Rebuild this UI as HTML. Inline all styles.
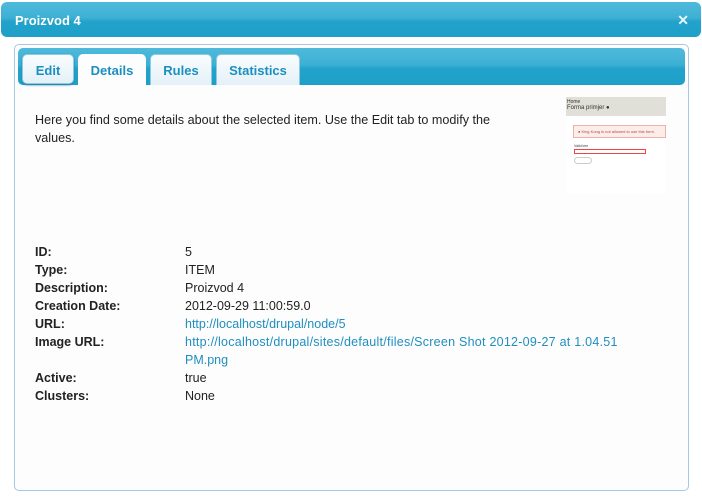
<!DOCTYPE html>
<html><head><style>
*{margin:0;padding:0;box-sizing:border-box}
body{width:702px;height:504px;background:#fff;font-family:"Liberation Sans",sans-serif;font-size:12px;color:#222;position:relative;overflow:hidden}
.title{position:absolute;left:1px;top:2px;width:700px;height:35px;border-radius:6px;background:linear-gradient(#4fbadb,#3db0d4 45%,#22a3cb 55%,#1e9fc8);}
.title span{position:absolute;left:14px;top:11px;color:#fff;font-weight:bold;font-size:13px}
.title b{position:absolute;right:12px;top:10px;color:#e8f6fb;font-size:14px;font-weight:bold}
.panel{position:absolute;left:14px;top:44px;width:675px;height:447px;border:1px solid #a6c8e0;border-radius:5px;background:#fdfdfd}
.bar{position:absolute;left:3px;top:3px;width:667px;height:37px;border-radius:5px;background:linear-gradient(#4fbadb,#3db0d4 45%,#22a3cb 55%,#1e9fc8)}
.tab{position:absolute;top:9px;height:31px;border-radius:5px 5px 0 0;background:linear-gradient(#fafcfd,#e3f1f8);color:#1a8fc0;font-weight:bold;font-size:13px;text-align:center;line-height:31px;border:1px solid #8fc9e2;border-bottom:none}
.tab.act{background:#fdfdfd;border-color:#fdfdfd;height:32px}
.tab.edit{height:30px;box-shadow:0 1px 2px #2c7fa8;border-bottom:1px solid #8fc9e2;border-radius:5px}
.intro{position:absolute;left:35px;top:111px;width:560px;font-size:12.6px;line-height:18px;color:#222;white-space:nowrap}
.shot{position:absolute;left:566px;top:97px;width:100px;height:97px;background:#fff}
table{position:absolute;left:35px;top:243px;border-collapse:collapse}
td{height:18px;font-size:12.5px;vertical-align:top;line-height:18px;white-space:nowrap}
td.l{width:150px;font-weight:bold}
a{color:#1f8fbf;text-decoration:none}
</style></head><body>
<div class="title"><span>Proizvod 4</span><b>✕</b></div>
<div class="panel">
<div class="bar"></div>
<div class="tab edit" style="left:7px;width:52px">Edit</div>
<div class="tab act" style="left:63px;width:68px">Details</div>
<div class="tab" style="left:135px;width:62px">Rules</div>
<div class="tab" style="left:201px;width:84px">Statistics</div>
</div>
<div class="intro">Here you find some details about the selected item. Use the Edit tab to modify the<br>values.</div>
<div class="shot">
<div style="height:19px;background:#e0dfd8;font-size:5px;padding:2px 1px;color:#333">Home<br><span style="font-size:6px">Forma primjer ●</span></div>
<div style="margin:9px 0 0 7px;height:13px;background:#fbeeea;border:1px solid #f0b0a8;font-size:4px;color:#b44;line-height:11px;padding-left:4px">● King Kong is not allowed to use this form.</div>
<div style="margin:6px 0 0 8px;font-size:3.5px;color:#333">Valid ime</div>
<div style="margin:1px 0 0 8px;width:72px;height:5px;border:1px solid #e44"></div>
<div style="margin:3px 0 0 8px;width:18px;height:7px;border:1px solid #ccc;border-radius:4px"></div>
</div>
<table>
<tr><td class="l">ID:</td><td>5</td></tr>
<tr><td class="l">Type:</td><td>ITEM</td></tr>
<tr><td class="l">Description:</td><td>Proizvod 4</td></tr>
<tr><td class="l">Creation Date:</td><td>2012-09-29 11:00:59.0</td></tr>
<tr><td class="l">URL:</td><td><a>http://localhost/drupal/node/5</a></td></tr>
<tr><td class="l">Image URL:</td><td><a style="letter-spacing:0.25px">http://localhost/drupal/sites/default/files/Screen Shot 2012-09-27 at 1.04.51</a><br><a>PM.png</a></td></tr>
<tr><td class="l">Active:</td><td>true</td></tr>
<tr><td class="l">Clusters:</td><td>None</td></tr>
</table>
</body></html>
